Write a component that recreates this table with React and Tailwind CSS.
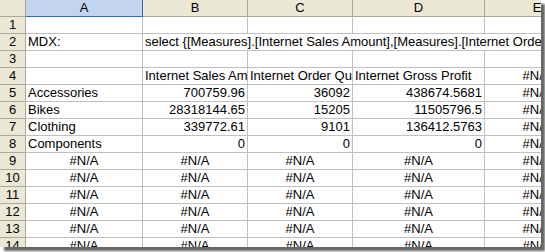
import React from 'react';

const COLS = ['A', 'B', 'C', 'D', 'E'];

const rows = [
  [],
  ['MDX:', { span: 'select {[Measures].[Internet Sales Amount],[Measures].[Internet Order Quantity],[Measures].[Internet Gross Profit]} on columns' }],
  [],
  ['', 'Internet Sales Amount', 'Internet Order Quantity', 'Internet Gross Profit', '#N/A'],
  ['Accessories', 700759.96, 36092, 438674.5681, '#N/A'],
  ['Bikes', 28318144.65, 15205, 11505796.5, '#N/A'],
  ['Clothing', 339772.61, 9101, 136412.5763, '#N/A'],
  ['Components', 0, 0, 0, '#N/A'],
  ['#N/A', '#N/A', '#N/A', '#N/A', '#N/A'],
  ['#N/A', '#N/A', '#N/A', '#N/A', '#N/A'],
  ['#N/A', '#N/A', '#N/A', '#N/A', '#N/A'],
  ['#N/A', '#N/A', '#N/A', '#N/A', '#N/A'],
  ['#N/A', '#N/A', '#N/A', '#N/A', '#N/A'],
  ['#N/A', '#N/A', '#N/A', '#N/A', '#N/A'],
];

const Cell = ({ value }) => {
  // Excel "General" alignment: text left, numbers right, errors centred
  let align = 'text-left';
  if (typeof value === 'number') align = 'text-right';
  else if (typeof value === 'string' && value.startsWith('#')) align = 'text-center';
  return (
    <div className={`h-[17px] border-r border-b border-[#c0c0c0] px-[2px] leading-[16px] overflow-hidden whitespace-nowrap ${align}`}>
      {value === undefined ? '' : String(value)}
    </div>
  );
};

export default function App() {
  return (
    <div className="w-[545px] h-[252px] bg-white">
      <div
        className="w-[541px] h-[247px] overflow-hidden bg-white shadow-[4px_4px_2px_rgba(0,0,0,0.6)] text-[13px] text-black"
        style={{ fontFamily: '"Liberation Sans", Arial, sans-serif' }}
      >
        <div className="grid grid-cols-[26px_117px_105px_105px_132px_105px] w-[590px]">
          {/* column headers */}
          <div className="h-[17px] bg-[#ebe8d6] border-r border-b border-[#aca899]" />
          {COLS.map((c) => (
            <div
              key={c}
              className={`h-[17px] leading-[16px] text-center border-r border-b ${
                c === 'A' ? 'bg-[#c3d4ef] border-[#316ac5]' : 'bg-[#ebe8d6] border-[#aca899]'
              }`}
            >
              {c}
            </div>
          ))}

          {rows.map((row, i) => (
            <React.Fragment key={i}>
              <div className="h-[17px] leading-[16px] text-center bg-[#ebe8d6] border-r border-b border-[#aca899]">
                {i + 1}
              </div>
              {row[1] && row[1].span ? (
                <>
                  <Cell value={row[0]} />
                  <div className="col-span-4 h-[17px] border-b border-[#c0c0c0] px-[2px] leading-[16px] whitespace-nowrap overflow-hidden">
                    {row[1].span}
                  </div>
                </>
              ) : (
                COLS.map((c, j) => <Cell key={c} value={row[j]} />)
              )}
            </React.Fragment>
          ))}
        </div>
      </div>
    </div>
  );
}
